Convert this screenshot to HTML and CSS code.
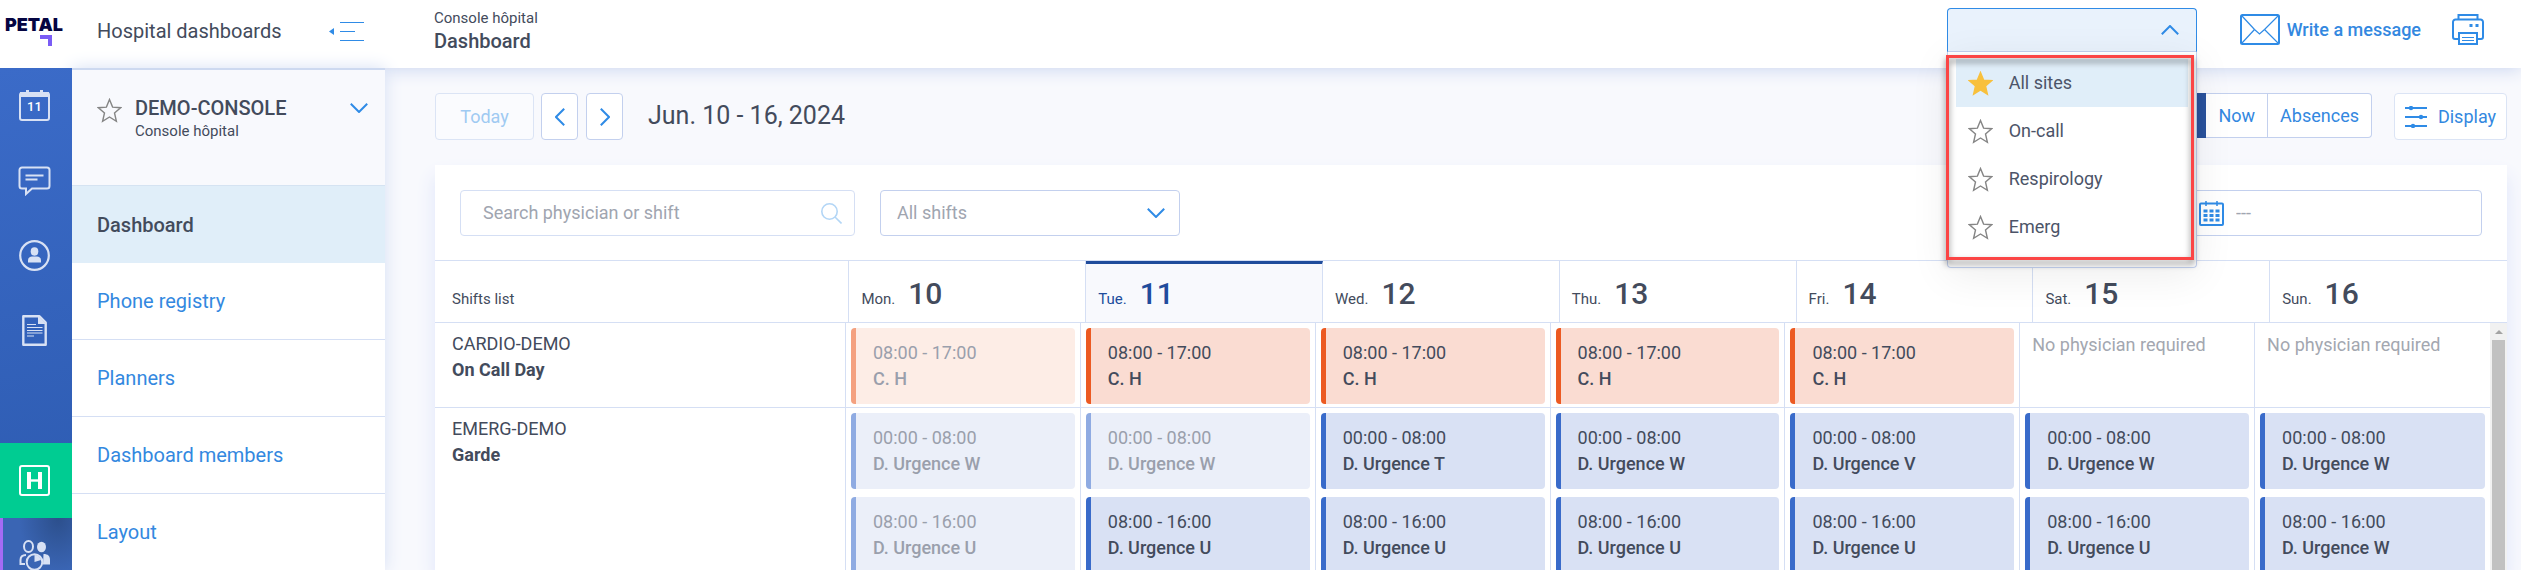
FILE: index.html
```
<!DOCTYPE html>
<html lang="en">
<head>
<meta charset="utf-8">
<title>Hospital dashboards</title>
<link rel="stylesheet" href="styles.css">
</head>
<body>
<svg class="sprite" aria-hidden="true">
  <symbol id="star" viewBox="0 0 25 25"><path d="M12.5 1.5l3.1 7.6 8 .6-6.1 5.3 1.9 8.3-6.9-4.300-6.900 4.300 1.900-8.300L1.400 9.700l8-.6z"/></symbol>
  <symbol id="chevron-down" viewBox="0 0 18 10"><path d="M.8.8L9 9 17.200.8"/></symbol>
</svg>
<header class="topbar">
  <a class="logo" href="#" aria-label="Petal">
    <span>PETAL</span>
    <svg width="12" height="11" viewBox="0 0 12 11"><path d="M0 0h12v11H8V4H0z" fill="#7a5cf5"/></svg>
  </a>
  <div class="topbar-side">
    <span class="product">Hospital dashboards</span>
    <button class="plain" aria-label="Collapse menu">
      <svg width="36" height="20" viewBox="0 0 36 20"><path d="M11 1.500h24M11 10.500h15M11 19.500h24" stroke="#2f8be6" fill="none"/><path d="M0 10.500l5-3.500v7z" fill="#2f8be6"/></svg>
    </button>
  </div>
  <div class="crumbs">
    <span class="crumb">Console hôpital</span>
    <h1>Dashboard</h1>
  </div>
  <div class="topbar-actions">
    <div class="site-picker">
      <button class="site-button" aria-label="Site" aria-haspopup="listbox" aria-expanded="true">
        <svg class="chevron up" width="18" height="10"><use href="#chevron-down"/></svg>
      </button>
      <div class="site-panel">
        <ul role="listbox" aria-label="Sites">
          <li class="selected" role="option" aria-selected="true"><svg class="star full"><use href="#star"/></svg>All sites</li>
          <li role="option"><svg class="star"><use href="#star"/></svg>On-call</li>
          <li role="option"><svg class="star"><use href="#star"/></svg>Respirology</li>
          <li role="option"><svg class="star"><use href="#star"/></svg>Emerg</li>
        </ul>
      </div>
      <div class="callout"></div>
    </div>
    <a class="message" href="#">
      <svg width="40" height="31" viewBox="0 0 40 31" fill="none" stroke="#2f8be6"><rect x="1" y="1" width="38" height="29" rx="1.500" stroke-width="2"/><path d="M2 2l12.500 13.500L19.500 20l5-4.500L38 2M2 29l12.500-13.500M38 29L24.500 15.500" stroke-width="1.200"/></svg>
      Write a message
    </a>
    <button class="plain" aria-label="Print">
      <svg width="32" height="31" viewBox="0 0 32 31" fill="none" stroke="#2f8be6" stroke-width="2"><path d="M6.500 5.500V1h19v4.500M6.500 25H3a2 2 0 0 1-2-2V8a2.500 2.500 0 0 1 2.500-2.500h25A2.500 2.500 0 0 1 31 8v15a2 2 0 0 1-2 2h-3.500"/><path d="M7 19h18v11H7z"/><path d="M10 23.500h12M10 26.500h12" stroke-width="1"/><path d="M17.500 11.500h3M23.500 11.500h3" stroke-width="3"/></svg>
    </button>
  </div>
</header>
<div class="shell">
  <nav class="rail" aria-label="Applications">
    <a href="#" aria-label="Calendar"><svg width="31" height="31" viewBox="0 0 31 31"><rect x="1" y="3" width="29" height="27" rx="2" fill="none" stroke="#d8e1f4" stroke-width="2"/><path d="M1 2h29v5H1zM7 0h3v4H7zM21 0h3v4h-3z" fill="#d8e1f4"/><text x="15.500" y="20.500" text-anchor="middle">11</text></svg></a>
    <a href="#" aria-label="Messages"><svg width="33" height="30" viewBox="0 0 33 30" fill="none" stroke="#d8e1f4" stroke-width="2"><path d="M4 1.500h25A2.500 2.500 0 0 1 31.500 4v16a2.500 2.500 0 0 1-2.500 2.500H14L8 28v-5.500H4A2.500 2.500 0 0 1 1.500 20V4A2.500 2.500 0 0 1 4 1.500z"/><path d="M7.500 9.500h18M7.500 13.500h12"/></svg></a>
    <a href="#" aria-label="Profile"><svg width="31" height="31" viewBox="0 0 31 31"><circle cx="15.500" cy="15.500" r="14.300" fill="none" stroke="#d8e1f4" stroke-width="2.200"/><ellipse cx="15.500" cy="11.500" rx="3.800" ry="4.200" fill="#d8e1f4"/><path d="M9 22.500v-2c0-3 2-4 4-4h5c2 0 4 1 4 4v2z" fill="#d8e1f4"/></svg></a>
    <a href="#" aria-label="Documents"><svg width="25" height="31" viewBox="0 0 25 31"><path d="M1.300 1.300h16.200l6.200 6.200v22.200H1.300z" fill="none" stroke="#d8e1f4" stroke-width="2.400" stroke-linejoin="round"/><path d="M16 1l8 8h-8z" fill="#d8e1f4"/><path d="M5 9.500h9M5 12.500h15.500M5 15.500h15.500M5 18h15.500M5 21h7" stroke="#d8e1f4" stroke-width="1.200"/></svg></a>
    <a class="active" href="#" aria-label="Hospital"><svg width="31" height="31" viewBox="0 0 31 31" fill="none" stroke="#fff"><rect x="1" y="1" width="29" height="29" rx="2" stroke-width="2"/><path d="M10 7v17M21 7v17" stroke-width="4"/><path d="M10 15.500h11" stroke-width="2.400"/></svg></a>
    <a class="next" href="#" aria-label="Groups"><svg width="31" height="31" viewBox="0 0 31 31" fill="none" stroke="#d8e1f4" stroke-width="2"><ellipse cx="9.500" cy="6.500" rx="4.500" ry="5.500"/><ellipse cx="22.500" cy="7" rx="4.500" ry="5.200" fill="#d8e1f4" stroke="none"/><path d="M6 24H1.500v-4c0-3.500 2-5 5.500-5"/><path d="M24 24.500h7V20c0-4-2-6-6.500-6z" fill="#d8e1f4" stroke="none"/><circle cx="15.500" cy="22" r="7.800"/><path d="M15.500 22v-7a7 7 0 0 1 6.500 5z" fill="#d8e1f4" stroke="none"/></svg></a>
  </nav>
  <aside class="side">
    <div class="side-head">
      <svg class="star"><use href="#star"/></svg>
      <div class="side-title"><h2>DEMO-CONSOLE</h2><span class="crumb">Console hôpital</span></div>
      <button class="plain" aria-label="Switch console"><svg class="chevron" width="18" height="10"><use href="#chevron-down"/></svg></button>
    </div>
    <nav class="menu" aria-label="Console">
      <a class="current" href="#">Dashboard</a>
      <a href="#">Phone registry</a>
      <a href="#">Planners</a>
      <a href="#">Dashboard members</a>
      <a href="#">Layout</a>
    </nav>
  </aside>
  <main class="main">
    <div class="toolbar">
      <button class="btn today" disabled>Today</button>
      <button class="btn arrow" aria-label="Previous week"><svg class="chevron" width="10" height="18" viewBox="0 0 10 18"><path d="M9.200.8L1 9l8.200 8.200"/></svg></button>
      <button class="btn arrow" aria-label="Next week"><svg class="chevron" width="10" height="18" viewBox="0 0 10 18"><path d="M.8.8L9 9 .8 17.200"/></svg></button>
      <span class="period">Jun. 10 - 16, 2024</span>
      <div class="views">
        <button class="on" aria-label="Week" aria-pressed="true"></button><button>Now</button><button>Absences</button>
      </div>
      <button class="btn display"><svg width="22" height="22" viewBox="0 0 22 22"><path d="M0 2h22M0 11h22M0 20h22" stroke="#2f8be6" stroke-width="1.800"/><g fill="#2f8be6"><circle cx="6" cy="2" r="2.200"/><circle cx="16" cy="11" r="2.200"/><circle cx="8" cy="20" r="2.200"/></g></svg>Display</button>
    </div>
    <section class="board">
      <div class="filters">
        <label class="field search">
          <input type="text" placeholder="Search physician or shift" aria-label="Search physician or shift">
          <svg width="21" height="21" viewBox="0 0 21 21" fill="none" stroke="#b3d6f6" stroke-width="1.600"><circle cx="8.500" cy="8.500" r="7.700"/><path d="M14 14l6.500 6.500"/></svg>
        </label>
        <label class="field shifts">
          <select aria-label="Shifts"><option>All shifts</option></select>
          <svg class="chevron" width="18" height="10"><use href="#chevron-down"/></svg>
        </label>
        <label class="field date">
          <svg width="25" height="25" viewBox="0 0 25 25"><rect x="1" y="2.500" width="23" height="21.500" rx="1" fill="none" stroke="#2f8be6" stroke-width="2"/><path d="M7 0v5M18 0v5" stroke="#2f8be6" stroke-width="1.500"/><path d="M4.500 10h4M10.500 10h4M16.500 10h4M4.500 14.500h4M10.500 14.500h4M16.500 14.500h4M4.500 19h4M10.500 19h4M16.500 19h4" stroke="#2f8be6" stroke-width="3"/></svg>
          <input type="text" placeholder="---" aria-label="Date">
        </label>
      </div>
      <table class="days">
        <colgroup><col class="first"><col span="7"></colgroup>
        <thead><tr>
          <th>Shifts list</th>
          <th>Mon.<b>10</b></th>
          <th class="now">Tue.<b>11</b></th>
          <th>Wed.<b>12</b></th>
          <th>Thu.<b>13</b></th>
          <th>Fri.<b>14</b></th>
          <th>Sat.<b>15</b></th>
          <th>Sun.<b>16</b></th>
        </tr></thead>
      </table>
      <div class="scroller">
        <table class="slots">
          <colgroup><col class="first"><col span="7"></colgroup>
          <tbody>
          <tr>
            <th scope="row">CARDIO-DEMO<b>On Call Day</b></th>
            <td><div class="card red past">08:00 - 17:00<b>C. H</b></div></td>
            <td><div class="card red">08:00 - 17:00<b>C. H</b></div></td>
            <td><div class="card red">08:00 - 17:00<b>C. H</b></div></td>
            <td><div class="card red">08:00 - 17:00<b>C. H</b></div></td>
            <td><div class="card red">08:00 - 17:00<b>C. H</b></div></td>
            <td class="none">No physician required</td>
            <td class="none">No physician required</td>
          </tr>
          <tr>
            <th scope="row">EMERG-DEMO<b>Garde</b></th>
            <td><div class="card past">00:00 - 08:00<b>D. Urgence W</b></div><div class="card past">08:00 - 16:00<b>D. Urgence U</b></div></td>
            <td><div class="card past">00:00 - 08:00<b>D. Urgence W</b></div><div class="card">08:00 - 16:00<b>D. Urgence U</b></div></td>
            <td><div class="card">00:00 - 08:00<b>D. Urgence T</b></div><div class="card">08:00 - 16:00<b>D. Urgence U</b></div></td>
            <td><div class="card">00:00 - 08:00<b>D. Urgence W</b></div><div class="card">08:00 - 16:00<b>D. Urgence U</b></div></td>
            <td><div class="card">00:00 - 08:00<b>D. Urgence V</b></div><div class="card">08:00 - 16:00<b>D. Urgence U</b></div></td>
            <td><div class="card">00:00 - 08:00<b>D. Urgence W</b></div><div class="card">08:00 - 16:00<b>D. Urgence U</b></div></td>
            <td><div class="card">00:00 - 08:00<b>D. Urgence W</b></div><div class="card">08:00 - 16:00<b>D. Urgence W</b></div></td>
          </tr>
          </tbody>
        </table>
        <div class="scrollbar" aria-hidden="true"><svg width="8" height="17" viewBox="0 0 8 17"><path d="M0 11l4-4 4 4z" fill="#a3a3a3"/></svg><div class="thumb"></div></div>
      </div>
    </section>
  </main>
</div>
</body>
</html>
```
FILE: styles.css
```
* { box-sizing: border-box; }
body {
  margin: 0;
  height: 100vh;
  overflow: hidden;
  display: flex;
  flex-direction: column;
  font: 18px/26px Roboto, "Liberation Sans", sans-serif;
  color: #434b5c;
  background: #f8f9fd;
}
h1, h2 { margin: 0; font-size: 20px; line-height: 26px; font-weight: 500; }
a { color: #3388e0; text-decoration: none; }
button, input, select { font: inherit; color: inherit; }
svg { flex: none; display: block; }
.sprite { position: absolute; width: 0; height: 0; }
.plain { border: 0; background: none; padding: 0; }
.star { width: 25px; height: 25px; fill: none; stroke: #858585; stroke-width: 1.4; }
.star.full { fill: #f8c03c; stroke: #f8c03c; }
.chevron { fill: none; stroke: #2f8be6; stroke-width: 2; }
.chevron.up { transform: rotate(180deg); }
.crumb { font-size: 15px; line-height: 20px; }

.topbar {
  display: flex;
  flex: none;
  height: 68px;
  background: #fff;
  box-shadow: 0 2px 16px #ccd7f0;
  position: relative;
  z-index: 2;
}
.logo {
  width: 72px;
  padding: 15px 0 0 5px;
  font: 900 18px/20px Inter, sans-serif;
  color: #050542;
}
.logo svg { margin-left: 35px; }
.topbar-side {
  width: 313px;
  height: 61px;
  padding: 0 20px 0 25px;
  display: flex;
  align-items: center;
  justify-content: space-between;
}
.product { font-size: 20px; }
.crumbs { padding: 8px 0 0 49px; display: flex; flex-direction: column; }
.topbar-actions {
  margin-left: auto;
  padding: 8px 37px 0 0;
  display: flex;
  align-items: flex-start;
}
.site-picker { position: relative; width: 250px; margin-right: 43px; }
.site-button {
  display: flex;
  align-items: center;
  justify-content: flex-end;
  width: 100%;
  height: 44px;
  padding: 0 17px;
  background: #e9f2fc;
  border: 1px solid #2f8be6;
  border-bottom-color: #c3d0ee;
  border-radius: 4px 4px 0 0;
}
.site-panel {
  position: absolute;
  top: 44px;
  left: 0;
  right: 0;
  padding: 7px 8px 8px;
  background: #fff;
  border: 1px solid #c3d0ee;
  border-top: 0;
  border-radius: 0 0 4px 4px;
  box-shadow: 0 8px 40px rgba(0, 0, 0, .07);
}
.site-panel ul { margin: 0; padding: 0 0 8px; list-style: none; }
.site-panel li {
  display: flex;
  align-items: center;
  gap: 16px;
  height: 48px;
  padding-left: 12px;
  color: #4c5468;
}
.site-panel .selected { background: #e0eef9; }
.callout {
  position: absolute;
  top: 47px;
  left: -1px;
  right: 3px;
  height: 205px;
  border: 3px solid #fb4545;
  filter: drop-shadow(0 4px 3px rgba(0, 0, 0, .5));
}
.message {
  display: flex;
  align-items: center;
  gap: 7px;
  margin: 6px 31px 0 0;
  font-weight: 500;
}
.topbar-actions > .plain { margin-top: 6px; }

.shell { display: flex; flex: 1; min-height: 0; }
.rail {
  width: 72px;
  flex: none;
  background: linear-gradient(170deg, #3b6bc8, #2c5aaf);
  position: relative;
  z-index: 3;
}
.rail a {
  display: flex;
  align-items: center;
  justify-content: center;
  height: 75px;
  padding-right: 3px;
}
.rail text { font: 500 13px Roboto, sans-serif; fill: #fff; }
.rail .active { margin-top: 75px; background: #00cc92; }
.rail .next {
  border-left: 3px solid #a46bf5;
  padding-right: 6px;
  background: radial-gradient(ellipse at 80% 0, #2c4f8c, #3a65b4 50%);
}
.side {
  width: 313px;
  flex: none;
  background: #fff;
  border-top: 2px solid #cdd9f0;
  box-shadow: 0 0 16px #d5dff4;
  position: relative;
  z-index: 2;
}
.side-head {
  display: flex;
  height: 115px;
  padding: 25px 17px 0 25px;
  background: #f8f9fd;
}
.side-head .star { margin-top: 3px; }
.side-title { flex: 1; padding-left: 13px; display: flex; flex-direction: column; }
.side-head .plain { align-self: flex-start; margin-top: 8px; }
.menu a {
  display: flex;
  align-items: center;
  height: 77px;
  padding-left: 25px;
  font-size: 20px;
  border-bottom: 1px solid #d5dff4;
}
.menu .current {
  height: 78px;
  color: #434b5c;
  font-weight: 500;
  background: #e0eef9;
  border-top: 1px solid #d5e3f2;
  border-bottom: 0;
}

.main {
  flex: 1;
  min-width: 0;
  padding: 25px 14px 0 50px;
  display: flex;
  flex-direction: column;
}
.toolbar { display: flex; align-items: flex-start; margin-bottom: 25px; }
.btn {
  display: flex;
  align-items: center;
  justify-content: center;
  height: 47px;
  padding: 0;
  background: #fff;
  border: 1px solid #c3d0ee;
  border-radius: 4px;
}
.today { width: 99px; margin-right: 7px; color: #9fcaf2; background: #fafbfe; border-color: #dbe4f5; }
.arrow { width: 37px; margin-right: 8px; }
.period { margin-left: 17px; font-size: 25px; line-height: 45px; }
.views { display: flex; height: 45px; margin-left: auto; }
.views button {
  padding: 0 12px;
  color: #3388e0;
  background: #fff;
  border: 1px solid #c3d0ee;
  border-left: 0;
}
.views button:last-child { border-radius: 0 4px 4px 0; }
.views .on { width: 72px; background: #2a529c; border-color: #2a529c; }
.display { width: 113px; gap: 11px; margin-left: 22px; color: #3388e0; border-color: #dbe4f5; }

.board {
  flex: 1;
  min-height: 0;
  display: flex;
  flex-direction: column;
  background: #fff;
  box-shadow: 0 12px 18px #dfe5fa;
}
.filters {
  display: flex;
  flex: none;
  height: 96px;
  gap: 25px;
  padding: 25px 25px 0;
  border-bottom: 1px solid #d5dff4;
}
.field {
  display: flex;
  align-items: center;
  height: 46px;
  border: 1px solid #c3d0ee;
  border-radius: 4px;
  color: #a0a5b0;
}
.field input, .field select {
  flex: 1;
  min-width: 0;
  padding: 0;
  border: 0;
  outline: 0;
  background: none;
  appearance: none;
}
.field ::placeholder { color: #a0a5b0; opacity: 1; }
.search { width: 395px; padding: 0 12px 0 22px; border-color: #d5dff4; }
.shifts { width: 300px; padding: 0 14px 0 16px; }
.date { width: 300px; padding-left: 16px; gap: 12px; margin-left: auto; }

table { width: 100%; table-layout: fixed; border-collapse: separate; border-spacing: 0; }
.first { width: 20%; }
th { text-align: left; font-weight: 400; }
.days th {
  height: 62px;
  padding: 18px 0 0 12px;
  font-size: 15px;
  line-height: 30px;
  vertical-align: baseline;
  border-right: 1px solid #d5dff4;
  border-bottom: 1px solid #d5dff4;
}
.days th:first-child { padding-left: 17px; }
.days th:last-child, .slots td:last-child { border-right: 0; }
.days b { margin-left: 13px; font-size: 30px; font-weight: 500; }
.days .now {
  padding-top: 15px;
  color: #204c9c;
  background: #f8f9fd;
  border-top: 3px solid #204c9c;
}
.scroller { display: flex; flex: 1; min-height: 0; overflow: hidden; }
.slots { flex: 1; align-self: flex-start; }
.slots th, .slots td {
  padding: 0;
  vertical-align: top;
  border-right: 1px solid #d5dff4;
  border-bottom: 1px solid #d5dff4;
}
.slots th { padding: 8px 0 0 17px; }
.slots b { display: block; font-weight: 500; }
.slots th b { font-weight: 700; }
.slots .none { padding: 9px 0 0 12px; color: #a3a7b0; }
.card {
  height: 76px;
  margin: 5px 5px 8px;
  padding: 12px 0 0 17px;
  background: #d9e1f4;
  border-left: 5px solid #396bca;
  border-radius: 4px;
}
.card:last-child { margin-bottom: 3px; }
.card.past { color: #9a9fac; background: #ebeff9; border-color: #8fabe2; }
.card.red { background: #fadcd2; border-color: #ec5a22; }
.card.red.past { background: #fdede6; border-color: #f4a180; }
.scrollbar {
  width: 17px;
  flex: none;
  background: #f1f1f1;
  display: flex;
  flex-direction: column;
  align-items: center;
}
.thumb { flex: 1; width: 13px; background: #c1c1c1; }
```
